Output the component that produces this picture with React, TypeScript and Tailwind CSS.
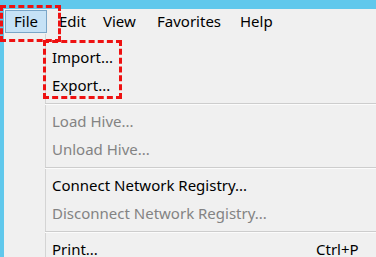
import React from "react";

const Sep = () => (
  <div className="pt-[4px] pb-[2px]">
    <div className="h-px bg-[#cdcdcd]" />
    <div className="h-px bg-[#fbfbfb]" />
  </div>
);

const Item = ({ label, disabled, shortcut }: { label: string; disabled?: boolean; shortcut?: string }) => (
  <div className={`h-[28px] flex items-center whitespace-nowrap ${disabled ? "text-[#838383]" : "text-[#000000]"}`}>
    <span className="w-[41px] shrink-0" />
    <span className="pl-[7px] w-[271px] shrink-0">{label}</span>
    {shortcut && <span>{shortcut}</span>}
  </div>
);

export default function App() {
  return (
    <div className="w-[376px] h-[257px] bg-[#60c8ec] pt-[9px] pl-[4px] relative overflow-hidden font-['Noto_Sans',sans-serif] text-[15px] leading-[28px]">
      <div className="bg-[#f0f0f0] h-full flex flex-col">
        <div className="h-[26px] flex items-start whitespace-nowrap text-black">
          <div className="ml-[1px] mt-[1px] w-[42px] h-[23px] flex items-center pl-[8px] border border-[#7aa6c8] bg-[#c6e2f6] leading-none">
            File
          </div>
          <div className="ml-[3px] w-[44px] h-[25px] flex items-center pl-[9px] leading-none">Edit</div>
          <div className="w-[54px] h-[25px] flex items-center pl-[9px] leading-none">View</div>
          <div className="w-[83px] h-[25px] flex items-center pl-[9px] leading-none">Favorites</div>
          <div className="h-[25px] flex items-center pl-[9px] leading-none">Help</div>
        </div>
        <div className="h-px bg-[#d8d8d8]" />
        <div className="h-px bg-[#a6a6a6]" />
        <div className="flex-1 relative pt-[9px]">
          <div className="absolute left-[41px] top-0 bottom-0 w-px bg-[#d4d4d4]" />
          <div className="relative">
            <Item label="Import..." />
            <Item label="Export..." />
            <div className="pl-[41px]"><Sep /></div>
            <Item label="Load Hive..." disabled />
            <Item label="Unload Hive..." disabled />
            <div className="pl-[41px]"><Sep /></div>
            <Item label="Connect Network Registry..." />
            <Item label="Disconnect Network Registry..." disabled />
            <div className="pl-[41px]"><Sep /></div>
            <Item label="Print..." shortcut="Ctrl+P" />
          </div>
        </div>
      </div>
      <div className="absolute left-0 top-[5px] w-[61px] h-[37px] border-[3px] border-dashed border-[#ee1111]" />
      <div className="absolute left-[43px] top-[40px] w-[79px] h-[59px] border-[3px] border-dashed border-[#ee1111]" />
    </div>
  );
}
